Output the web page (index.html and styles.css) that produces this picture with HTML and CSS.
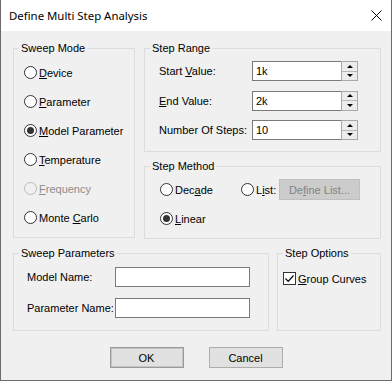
FILE: index.html
```html
<!DOCTYPE html>
<html lang="en">
<head>
    <meta charset="UTF-8">
    <title>Define Multi Step Analysis</title>
    <link rel="stylesheet" href="styles.css">
</head>
<body>
    <div class="window">
        <div class="titlebar">
            <span class="title">Define Multi Step Analysis</span>
            <svg class="close" width="11" height="11" viewBox="0 0 11 11">
                <path d="M0.5 0.5 L10.5 10.5 M10.5 0.5 L0.5 10.5" stroke="#000" stroke-width="1"/>
            </svg>
        </div>

        <div class="content">
            <div class="top-row">
                <fieldset class="group sweep-mode">
                    <legend>Sweep Mode</legend>
                    <div class="radio-list">
                        <label class="radio"><span class="circle"></span><span><u>D</u>evice</span></label>
                        <label class="radio"><span class="circle"></span><span><u>P</u>arameter</span></label>
                        <label class="radio"><span class="circle checked"></span><span><u>M</u>odel Parameter</span></label>
                        <label class="radio"><span class="circle"></span><span><u>T</u>emperature</span></label>
                        <label class="radio disabled"><span class="circle"></span><span><u>F</u>requency</span></label>
                        <label class="radio"><span class="circle"></span><span>Monte <u>C</u>arlo</span></label>
                    </div>
                </fieldset>

                <div class="right-col">
                    <fieldset class="group step-range">
                        <legend>Step Range</legend>
                        <div class="range-body">
                            <div class="field-row">
                                <span class="field-label">Start <u>V</u>alue:</span>
                                <div class="spin">
                                    <span class="spin-text">1k</span>
                                    <span class="spin-btns"><span class="arrow up"></span><span class="arrow down"></span></span>
                                </div>
                            </div>
                            <div class="field-row">
                                <span class="field-label"><u>E</u>nd Value:</span>
                                <div class="spin">
                                    <span class="spin-text">2k</span>
                                    <span class="spin-btns"><span class="arrow up"></span><span class="arrow down"></span></span>
                                </div>
                            </div>
                            <div class="field-row">
                                <span class="field-label">Number Of Steps:</span>
                                <div class="spin">
                                    <span class="spin-text">10</span>
                                    <span class="spin-btns"><span class="arrow up"></span><span class="arrow down"></span></span>
                                </div>
                            </div>
                        </div>
                    </fieldset>

                    <fieldset class="group step-method">
                        <legend>Step Method</legend>
                        <div class="method-grid">
                            <label class="radio"><span class="circle"></span><span>Dec<u>a</u>de</span></label>
                            <label class="radio"><span class="circle"></span><span>L<u>i</u>st:</span></label>
                            <button class="btn disabled-btn" disabled>De<u>f</u>ine List...</button>
                            <label class="radio"><span class="circle checked"></span><span><u>L</u>inear</span></label>
                        </div>
                    </fieldset>
                </div>
            </div>

            <div class="bottom-row">
                <fieldset class="group sweep-params">
                    <legend>Sweep Parameters</legend>
                    <div class="params-body">
                        <div class="param-row">
                            <span class="param-label">Model Name:</span>
                            <div class="textbox"></div>
                        </div>
                        <div class="param-row">
                            <span class="param-label">Parameter Name:</span>
                            <div class="textbox"></div>
                        </div>
                    </div>
                </fieldset>

                <fieldset class="group step-options">
                    <legend>Step Options</legend>
                    <label class="check">
                        <span class="box">
                            <svg width="11" height="11" viewBox="0 0 11 11">
                                <path d="M1.5 5.5 L4.2 8.3 L9.5 2.5" fill="none" stroke="#000" stroke-width="1.2"/>
                            </svg>
                        </span>
                        <span><u>G</u>roup Curves</span>
                    </label>
                </fieldset>
            </div>

            <div class="buttons">
                <button class="btn default-btn">OK</button>
                <button class="btn">Cancel</button>
            </div>
        </div>
    </div>
</body>
</html>
```

FILE: styles.css
```css
body {
    margin: 0;
    padding: 0;
    font-family: "Liberation Sans", Arial, sans-serif;
    font-size: 11px;
    color: #000;
    background: #f0f0f0;
}

.window {
    width: 392px;
    height: 381px;
    box-sizing: border-box;
    border: 1px solid #6b6b6b;
    border-top: none;
    background: #f0f0f0;
}

.titlebar {
    height: 31px;
    background: #fff;
    display: flex;
    align-items: center;
    justify-content: space-between;
    padding: 0 9px 0 8px;
}

.title {
    font-family: "Noto Sans", sans-serif;
    font-size: 11.4px;
    margin-top: -1px;
}

.close {
    display: block;
}

.content {
    padding: 11px 0 0 12px;
}

/* group boxes */
.group {
    margin: 0;
    padding: 0;
    border: 1px solid #dcdcdc;
    box-sizing: border-box;
    min-width: 0;
}

.group legend {
    margin-left: 5px;
    padding: 0 2px;
    line-height: 13px;
}

.top-row {
    display: flex;
    align-items: flex-start;
    gap: 9px;
}

.sweep-mode {
    width: 122px;
    height: 196px;
}

.radio-list {
    display: flex;
    flex-direction: column;
    padding: 3px 0 0 10px;
}

.radio {
    display: flex;
    align-items: center;
    height: 29px;
    gap: 2px;
}

.circle {
    width: 13px;
    height: 13px;
    box-sizing: border-box;
    border: 1px solid #333;
    border-radius: 50%;
    background: #fff;
    display: flex;
    align-items: center;
    justify-content: center;
}

.circle.checked::after {
    content: "";
    width: 7px;
    height: 7px;
    border-radius: 50%;
    background: #333;
}

.radio.disabled {
    color: #8c8c8c;
}

.radio.disabled .circle {
    border-color: #bcbcbc;
    background: #f0f0f0;
}

.right-col {
    width: 237px;
    display: flex;
    flex-direction: column;
    gap: 8px;
}

.step-range {
    height: 110px;
}

.range-body {
    padding: 6px 0 0 14px;
}

.field-row {
    display: flex;
    align-items: center;
    height: 20px;
    margin-bottom: 9.5px;
}

.field-label {
    width: 93px;
}

.spin {
    display: flex;
    height: 20px;
}

.spin-text {
    width: 89px;
    box-sizing: border-box;
    border: 1px solid #7a7a7a;
    border-right: none;
    background: #fff;
    padding: 3px 0 0 3px;
}

.spin-btns {
    width: 17px;
    box-sizing: border-box;
    border: 1px solid #a8a8a8;
    background: #ececec;
    display: flex;
    flex-direction: column;
}

.arrow {
    flex: 1;
    display: flex;
    align-items: center;
    justify-content: center;
}

.arrow.up {
    border-bottom: 1px solid #b8b8b8;
}

.arrow.up::before {
    content: "";
    border-left: 3px solid transparent;
    border-right: 3px solid transparent;
    border-bottom: 3px solid #000;
}

.arrow.down::before {
    content: "";
    border-left: 3px solid transparent;
    border-right: 3px solid transparent;
    border-top: 3px solid #000;
}

.step-method {
    height: 79px;
}

.method-grid {
    display: grid;
    grid-template-columns: 81px 38px 81px;
    align-items: center;
    padding: 2px 0 0 15px;
}

.btn {
    font-family: "Liberation Sans", Arial, sans-serif;
    font-size: 11px;
    color: #000;
    background: #e1e1e1;
    border: 1px solid #adadad;
    height: 21px;
    width: 74px;
    padding: 0;
}

.disabled-btn {
    width: 81px;
    height: 21px;
    background: #cccccc;
    border-color: #bfbfbf;
    color: #838383;
}

.bottom-row {
    display: flex;
    gap: 8px;
    margin-top: 8px;
}

.sweep-params {
    width: 256px;
    height: 84px;
}

.params-body {
    padding: 7px 0 0 13px;
}

.param-row {
    display: flex;
    align-items: center;
    height: 20px;
    margin-bottom: 11px;
}

.param-label {
    width: 88px;
}

.textbox {
    width: 135px;
    height: 20px;
    box-sizing: border-box;
    border: 1px solid #7a7a7a;
    background: #fff;
}

.step-options {
    width: 104px;
    height: 84px;
}

.check {
    display: flex;
    align-items: center;
    gap: 2px;
    padding: 12px 0 0 5px;
}

.box {
    width: 13px;
    height: 13px;
    box-sizing: border-box;
    border: 1px solid #333;
    background: #fff;
    display: flex;
    align-items: center;
    justify-content: center;
}

.box svg {
    display: block;
}

.buttons {
    display: flex;
    justify-content: center;
    gap: 25px;
    margin: 16px 0 0 -12px;
}

.default-btn {
    border-color: #9a9a9a;
    box-shadow: inset 0 0 0 1px #c4c4c4;
}
```
